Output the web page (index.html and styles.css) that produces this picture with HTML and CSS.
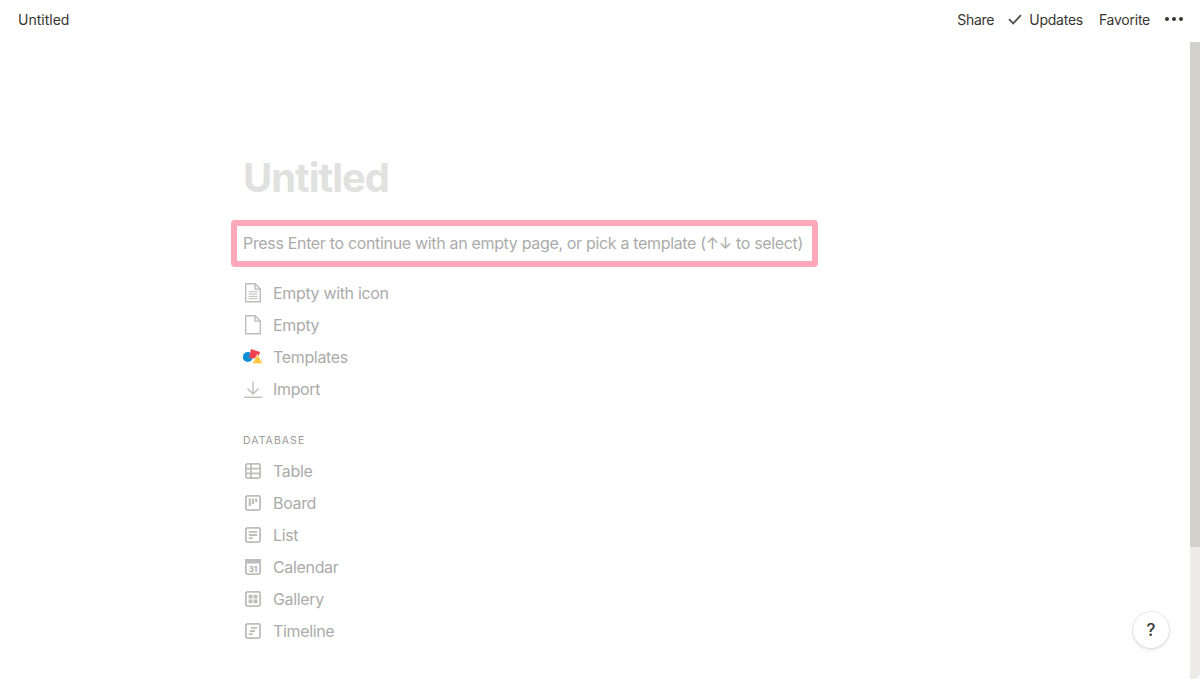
FILE: index.html
```html
<!DOCTYPE html>
<html lang="en">
<head>
    <meta charset="UTF-8">
    <title>Untitled</title>
    <link rel="stylesheet" href="styles.css">
</head>
<body>
    <header class="topbar">
        <div class="crumb">Untitled</div>
        <div class="actions">
            <span>Share</span>
            <span class="updates">
                <svg class="check" width="14" height="14" viewBox="0 0 14 14"><path d="M1 7.200 5.200 11.400 13 3.200" fill="none" stroke="currentColor" stroke-width="1.900"/></svg>
                Updates
            </span>
            <span>Favorite</span>
            <svg class="dots" width="18" height="4" viewBox="0 0 18 4"><circle cx="2" cy="2" r="2"/><circle cx="9" cy="2" r="2"/><circle cx="16" cy="2" r="2"/></svg>
        </div>
    </header>
    <div class="body-row">
        <main class="page">
            <h1 class="title">Untitled</h1>
            <div class="hint">Press Enter to continue with an empty page, or pick a template (↑↓ to select)</div>
            <ul class="menu">
                <li>
                    <svg class="icon" width="20" height="20" viewBox="0 0 20 20"><path d="M2.700 0.800h9.300l5.300 5.300V18.700H2.700z M12 0.800v5.300h5.300" class="line thick"/><path d="M5.500 8.800h9M5.500 11.100h9M5.500 13.400h9M5.500 15.700h9" class="line"/></svg>
                    Empty with icon
                </li>
                <li>
                    <svg class="icon" width="20" height="20" viewBox="0 0 20 20"><path d="M2.700 0.800h9.300l5.300 5.300V18.700H2.700z M12 0.800v5.300h5.300" class="line thick"/></svg>
                    Empty
                </li>
                <li>
                    <svg class="icon" width="20" height="20" viewBox="0 0 20 20"><circle cx="4.800" cy="10" r="5" fill="#0D8FD6"/><path d="M8 2 17 5 15 12 6 11z" fill="#F2424F"/><path d="M14.500 7.500 20 16.800H9z" fill="#FFC43D" stroke="#FFFFFF" stroke-width="0.800"/></svg>
                    Templates
                </li>
                <li>
                    <svg class="icon" width="20" height="20" viewBox="0 0 20 20"><path d="M10 2.500v12.500M4.500 9.500l5.500 5.500 5.500-5.500" class="line thick"/><path d="M1 18.300h18" class="line thick"/></svg>
                    Import
                </li>
            </ul>
            <div class="section-label">DATABASE</div>
            <ul class="menu">
                <li>
                    <svg class="icon" width="20" height="20" viewBox="0 0 20 20"><rect x="2.900" y="2.900" width="14.200" height="14.200" rx="1.500" class="line heavy"/><path d="M2.900 7.700h14.200M2.900 12.300h14.200M7.900 2.900V17.100" class="line heavy"/></svg>
                    Table
                </li>
                <li>
                    <svg class="icon" width="20" height="20" viewBox="0 0 20 20"><rect x="2.900" y="2.900" width="14.200" height="14.200" rx="1.500" class="line heavy"/><path d="M5.700 5.500h2.200v7.500H5.700zM8.900 5.500h2.200v5.500H8.900zM12.100 5.500h2.200v3.500H12.100z" class="fill"/></svg>
                    Board
                </li>
                <li>
                    <svg class="icon" width="20" height="20" viewBox="0 0 20 20"><rect x="2.900" y="2.900" width="14.200" height="14.200" rx="1.500" class="line heavy"/><path d="M5.800 6.800h8.400M5.800 10h8.400M5.800 13.200h4" class="line heavy"/></svg>
                    List
                </li>
                <li>
                    <svg class="icon" width="20" height="20" viewBox="0 0 20 20"><rect x="2.900" y="2.900" width="14.200" height="14.200" rx="1.500" class="line heavy"/><path d="M2 2h16v4.500H2z" class="fill"/><text x="10" y="14.800" class="cal-num">31</text></svg>
                    Calendar
                </li>
                <li>
                    <svg class="icon" width="20" height="20" viewBox="0 0 20 20"><rect x="2.900" y="2.900" width="14.200" height="14.200" rx="1.500" class="line heavy"/><path d="M5.500 5.800h4v3.700h-4zM10.500 5.800h4v3.700h-4zM5.500 10.600h4v3.700h-4zM10.500 10.600h4v3.700h-4z" class="fill"/></svg>
                    Gallery
                </li>
                <li>
                    <svg class="icon" width="20" height="20" viewBox="0 0 20 20"><rect x="2.900" y="2.900" width="14.200" height="14.200" rx="1.500" class="line heavy"/><path d="M8 6.800h6.200M7 10h5M5.800 13.200h4" class="line heavy"/></svg>
                    Timeline
                </li>
            </ul>
        </main>
        <div class="scrollbar"><div class="thumb"></div></div>
    </div>
    <div class="help">?</div>
</body>
</html>
```

FILE: styles.css
```css
html, body {
    height: 100%;
}
body {
    font-family: 'Inter', 'Liberation Sans', sans-serif;
    background-color: #FFFFFF;
    color: #37352F;
    margin: 0;
    height: 679px;
    overflow: hidden;
    display: flex;
    flex-direction: column;
}
.topbar {
    height: 42px;
    flex-shrink: 0;
    display: flex;
    justify-content: space-between;
    align-items: center;
    padding: 0 17px 4px 18px;
    box-sizing: border-box;
    font-size: 14px;
}
.actions {
    display: flex;
    align-items: center;
    gap: 16px;
    letter-spacing: -0.25px;
}
.updates {
    display: flex;
    align-items: center;
    gap: 7px;
    margin-left: -2px;
}
.check {
    color: #55534E;
}
.dots {
    fill: #37352F;
    margin-left: -1px;
}
.body-row {
    flex: 1;
    display: flex;
    min-height: 0;
}
.page {
    flex: 1;
    padding: 112px 0 0 243px;
    overflow: hidden;
}
.title {
    margin: 0;
    font-size: 40px;
    line-height: 48px;
    font-weight: 700;
    letter-spacing: -1.05px;
    color: #E1E1E0;
}
.hint {
    width: 587px;
    height: 47px;
    margin: 18px 0 0 -12px;
    padding-left: 6px;
    border: 6px solid #FFA8B9;
    border-radius: 4px;
    box-sizing: border-box;
    font-size: 16px;
    letter-spacing: -0.33px;
    line-height: 30px;
    padding-top: 2px;
    color: #ABABAA;
    white-space: nowrap;
}
.menu {
    list-style: none;
    margin: 10px 0 0;
    padding: 0;
}
.menu li {
    height: 32px;
    display: flex;
    align-items: center;
    gap: 10px;
    font-size: 16px;
    letter-spacing: -0.34px;
    color: #ABABAA;
}
.icon {
    flex-shrink: 0;
    width: 20px;
    height: 20px;
}
.line {
    fill: none;
    stroke: #BDBDBC;
    stroke-width: 1;
}
.thick {
    stroke-width: 1.400;
}
.heavy {
    stroke-width: 1.800;
}
.fill {
    fill: #BDBDBC;
}
.cal-num {
    font-size: 8px;
    font-weight: 700;
    letter-spacing: 0;
    text-anchor: middle;
    fill: #ABABAA;
}
.section-label {
    margin-top: 27px;
    height: 18px;
    line-height: 18px;
    font-size: 10.500px;
    letter-spacing: 1.050px;
    color: #9B9A97;
}
.section-label + .menu {
    margin-top: 5px;
}
.scrollbar {
    width: 10px;
    flex-shrink: 0;
    background-color: #EDECE9;
    border-bottom-right-radius: 6px;
}
.thumb {
    height: 505px;
    background-color: #D3D1CB;
}
.help {
    position: absolute;
    left: 1133px;
    top: 612px;
    width: 36px;
    height: 36px;
    border-radius: 50%;
    background-color: #FFFFFF;
    box-shadow: 0 0 0 1px rgba(15, 15, 15, 0.08), 0 2px 4px rgba(15, 15, 15, 0.1);
    display: flex;
    align-items: center;
    justify-content: center;
    font-size: 17px;
    font-weight: 500;
}
```
